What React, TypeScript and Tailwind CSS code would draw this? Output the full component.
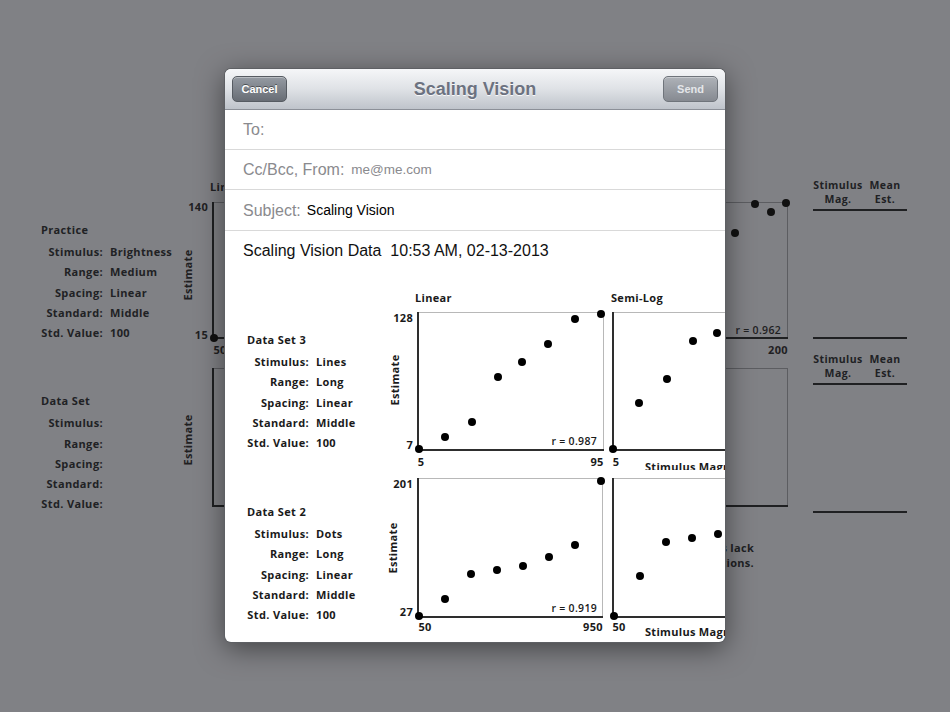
import React from "react";

const chartFont = "font-['Open_Sans','DejaVu_Sans',sans-serif]";

type Row = [string, string];

function InfoBlock({ title, rows, color }: { title: string; rows: Row[]; color: string }) {
  return (
    <div className={`${chartFont} text-[11px] font-bold tracking-[0.35px] ${color}`}>
      <div className="leading-[20px]">{title}</div>
      <div className="mt-[2px] grid grid-cols-[62px_auto] gap-x-[7px] leading-[20.25px]">
        {rows.map(([k, v]) => (
          <React.Fragment key={k}>
            <div className="text-right whitespace-nowrap">{k}</div>
            <div className="whitespace-nowrap">{v}</div>
          </React.Fragment>
        ))}
      </div>
    </div>
  );
}

function Dots({ pts, fill }: { pts: [number, number][]; fill: string }) {
  return (
    <>
      {pts.map(([x, y], i) => (
        <circle key={i} cx={x} cy={y} r={4} fill={fill} />
      ))}
    </>
  );
}

function Box({ l, t, r, b, thin, thick }: { l: number; t: number; r: number; b: number; thin: string; thick: string }) {
  return (
    <>
      <line x1={l} y1={t + 0.5} x2={r} y2={t + 0.5} stroke={thin} strokeWidth={1} />
      <line x1={r + 0.5} y1={t} x2={r + 0.5} y2={b} stroke={thin} strokeWidth={1} />
      <line x1={l} y1={t} x2={l} y2={b + 1} stroke={thick} strokeWidth={2} />
      <line x1={l - 1} y1={b} x2={r + 1} y2={b} stroke={thick} strokeWidth={2} />
    </>
  );
}

function ModalRow1() {
  const ink = "#1a1a1a";
  return (
    <svg width={345} height={182} className={`block shrink-0 ${chartFont}`}>
      <g fill={ink} fontSize={11} fontWeight={700} letterSpacing={0.3}>
        <text x={35} y={14}>Linear</text>
        <text x={231} y={14}>Semi-Log</text>
        <text x={33} y={34} textAnchor="end">128</text>
        <text x={33} y={161} textAnchor="end">7</text>
        <text x={41} y={178} textAnchor="middle">5</text>
        <text x={217} y={178} textAnchor="middle">95</text>
        <text x={236} y={178} textAnchor="middle">5</text>
        <text x={265} y={183}>Stimulus Magnitude</text>
        <text transform="translate(19 92) rotate(-90)" textAnchor="middle">Estimate</text>
        <text x={217} y={157} textAnchor="end" fontWeight={600} fontSize={10.5}>r = 0.987</text>
      </g>
      <Box l={38} t={24} r={223} b={162} thin="#b8b8b8" thick="#2e2e2e" />
      <Box l={233} t={24} r={400} b={162} thin="#b8b8b8" thick="#2e2e2e" />
      <Dots
        fill="#000"
        pts={[[39, 161], [65, 149], [92, 134], [118, 89], [142, 74], [168, 56], [195, 31], [221, 26]]}
      />
      <Dots fill="#000" pts={[[233, 161], [259, 115], [287, 91], [313, 53], [337, 45]]} />
    </svg>
  );
}

function ModalRow2() {
  const ink = "#1a1a1a";
  return (
    <svg width={345} height={172} className={`block shrink-0 ${chartFont}`}>
      <g fill={ink} fontSize={11} fontWeight={700} letterSpacing={0.3}>
        <text x={33} y={18} textAnchor="end">201</text>
        <text x={33} y={146} textAnchor="end">27</text>
        <text x={45} y={161} textAnchor="middle">50</text>
        <text x={213} y={161} textAnchor="middle">950</text>
        <text x={239} y={161} textAnchor="middle">50</text>
        <text x={265} y={166}>Stimulus Magnitude</text>
        <text transform="translate(17 78) rotate(-90)" textAnchor="middle">Estimate</text>
        <text x={217} y={142} textAnchor="end" fontWeight={600} fontSize={10.5}>r = 0.919</text>
      </g>
      <Box l={38} t={8} r={222} b={147} thin="#b8b8b8" thick="#2e2e2e" />
      <Box l={233} t={8} r={400} b={147} thin="#b8b8b8" thick="#2e2e2e" />
      <Dots
        fill="#000"
        pts={[[39, 146], [65, 129], [91, 104], [117, 100], [143, 96], [169, 87], [195, 75], [221, 11]]}
      />
      <Dots fill="#000" pts={[[234, 146], [260, 106], [286, 72], [312, 68], [338, 64]]} />
    </svg>
  );
}

function BgChart1() {
  const ink = "#1f2022";
  return (
    <svg width={610} height={180} className={`block ${chartFont}`}>
      <g fill={ink} fontSize={11} fontWeight={700} letterSpacing={0.3}>
        <text x={30} y={13}>Linear</text>
        <text x={28} y={33} textAnchor="end">140</text>
        <text x={28} y={161} textAnchor="end">15</text>
        <text x={40} y={176} textAnchor="middle">50</text>
        <text x={598} y={176} textAnchor="middle">200</text>
        <text transform="translate(12 97) rotate(-90)" textAnchor="middle">Estimate</text>
        <text x={601} y={156} textAnchor="end" fontWeight={600} fontSize={10.5}>r = 0.962</text>
      </g>
      <Box l={33} t={24} r={607} b={160} thin="#5c5d61" thick="#1f2022" />
      <Dots fill="#111" pts={[[34, 160], [555, 55], [575, 26], [591, 34], [606, 25]]} />
    </svg>
  );
}

function BgChart2() {
  const ink = "#1f2022";
  return (
    <svg width={610} height={160} className={`block ${chartFont}`}>
      <g fill={ink} fontSize={11} fontWeight={700} letterSpacing={0.3}>
        <text transform="translate(12 82) rotate(-90)" textAnchor="middle">Estimate</text>
      </g>
      <Box l={33} t={10} r={607} b={148} thin="#5c5d61" thick="#1f2022" />
    </svg>
  );
}

function TableHead() {
  return (
    <div className="flex justify-between pb-[3px] border-b-2 border-[#1f2022] leading-[14px] text-center">
      <div className="w-[50px]">
        <div>Stimulus</div>
        <div>Mag.</div>
      </div>
      <div className="w-[32px] mr-[6px]">
        <div>Mean</div>
        <div>Est.</div>
      </div>
    </div>
  );
}

export default function App() {
  const helv = "font-['Liberation_Sans','Helvetica','Arial',sans-serif]";
  return (
    <div className="relative w-[950px] h-[712px] overflow-hidden bg-[#808185]">
      {/* Background (dimmed) app */}
      <div className="flex">
        <div className="w-[180px] shrink-0 pl-[41px] pt-[220px]">
          <InfoBlock
            title="Practice"
            color="text-[#202124]"
            rows={[
              ["Stimulus:", "Brightness"],
              ["Range:", "Medium"],
              ["Spacing:", "Linear"],
              ["Standard:", "Middle"],
              ["Std. Value:", "100"],
            ]}
          />
          <div className="mt-[48px]">
            <InfoBlock
              title="Data Set"
              color="text-[#202124]"
              rows={[
                ["Stimulus:", ""],
                ["Range:", ""],
                ["Spacing:", ""],
                ["Standard:", ""],
                ["Std. Value:", ""],
              ]}
            />
          </div>
        </div>
        <div className="w-[610px] shrink-0 pt-[178px]">
          <BgChart1 />
          <BgChart2 />
          <div
            className={`${chartFont} mt-[22px] w-[574px] text-right text-[11px] font-bold leading-[15px] tracking-[0.3px] text-[#202124]`}
          >
            <div>Incomplete data sets lack</div>
            <div>some conditions.</div>
          </div>
        </div>
        <div
          className={`${chartFont} ml-[23px] w-[94px] shrink-0 pt-[178px] text-[10.5px] font-bold tracking-[0.4px] text-[#202124]`}
        >
          <TableHead />
          <div className="h-[128px] border-b-2 border-[#1f2022]" />
          <div className="mt-[13px]">
            <TableHead />
          </div>
          <div className="h-[128px] border-b-2 border-[#1f2022]" />
        </div>
      </div>

      {/* Mail compose sheet */}
      <div className="absolute left-[225px] top-[69px] w-[500px] h-[573px] overflow-hidden rounded-[6px] bg-white shadow-[0_6px_28px_rgba(0,0,0,0.5)] ring-1 ring-[#5e6064]">
        <div className="flex h-[41px] items-center justify-between border-b border-[#8c9098] bg-gradient-to-b from-[#f5f6f8] via-[#dfe2e6] to-[#bfc4cb] px-[7px]">
          <div
            className={`${helv} flex h-[26px] w-[55px] items-center justify-center rounded-[5px] border border-[#565b62] bg-gradient-to-b from-[#959ba3] to-[#686d75] text-[11px] font-bold text-white shadow-[inset_0_1px_0_rgba(255,255,255,0.35)] [text-shadow:0_-1px_0_rgba(0,0,0,0.45)]`}
          >
            Cancel
          </div>
          <div
            className={`${helv} text-[18px] font-bold text-[#6c7280] [text-shadow:0_1px_0_rgba(255,255,255,0.85)]`}
          >
            Scaling Vision
          </div>
          <div
            className={`${helv} flex h-[26px] w-[55px] items-center justify-center rounded-[5px] border border-[#6f747b] bg-gradient-to-b from-[#aeb2b8] to-[#868a91] text-[11px] font-bold text-[#e4e6e9] shadow-[inset_0_1px_0_rgba(255,255,255,0.35)]`}
          >
            Send
          </div>
        </div>
        <div className={`${helv} flex h-[40px] items-center border-b border-[#d9d9d9] pl-[18px] pt-px text-[16px] text-[#8a8a8e]`}>
          To:
        </div>
        <div className={`${helv} flex h-[40px] items-center border-b border-[#d9d9d9] pl-[18px] pt-px text-[16px] text-[#8a8a8e]`}>
          <span>Cc/Bcc, From:</span>
          <span className="ml-[7px] text-[13.5px] text-[#8a8a8e]">me@me.com</span>
        </div>
        <div className={`${helv} flex h-[41px] items-center border-b border-[#d9d9d9] pl-[18px] pt-px text-[16px] text-[#8a8a8e]`}>
          <span>Subject:</span>
          <span className="ml-[6px] text-[14px] text-black">Scaling Vision</span>
        </div>
        <div className={`${helv} whitespace-pre pl-[18px] pt-[11px] text-[16px] leading-[18px] text-[#111]`}>
          Scaling Vision Data  10:53 AM, 02-13-2013
        </div>
        <div className="mt-[28px]">
          <div className="flex h-[182px]">
            <div className="w-[155px] shrink-0 pl-[22px] pt-[42px]">
              <InfoBlock
                title="Data Set 3"
                color="text-[#1a1a1a]"
                rows={[
                  ["Stimulus:", "Lines"],
                  ["Range:", "Long"],
                  ["Spacing:", "Linear"],
                  ["Standard:", "Middle"],
                  ["Std. Value:", "100"],
                ]}
              />
            </div>
            <ModalRow1 />
          </div>
          <div className="flex h-[172px]">
            <div className="w-[155px] shrink-0 pl-[22px] pt-[32px]">
              <InfoBlock
                title="Data Set 2"
                color="text-[#1a1a1a]"
                rows={[
                  ["Stimulus:", "Dots"],
                  ["Range:", "Long"],
                  ["Spacing:", "Linear"],
                  ["Standard:", "Middle"],
                  ["Std. Value:", "100"],
                ]}
              />
            </div>
            <ModalRow2 />
          </div>
        </div>
      </div>
    </div>
  );
}
